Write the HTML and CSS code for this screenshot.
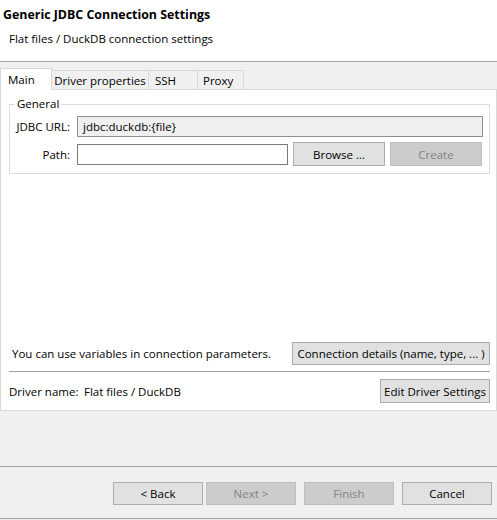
FILE: index.html
```html
<!DOCTYPE html>
<html>
<head>
    <meta charset="utf-8">
    <title>Generic JDBC Connection Settings</title>
    <link rel="stylesheet" href="styles.css">
</head>
<body>
    <div class="header">
        <div class="title">Generic JDBC Connection Settings</div>
        <div class="subtitle">Flat files / DuckDB connection settings</div>
    </div>

    <div class="main">
        <div class="tabs">
            <div class="tab tab-main active">Main</div>
            <div class="tab tab-driver">Driver properties</div>
            <div class="tab tab-ssh">SSH</div>
            <div class="tab tab-proxy">Proxy</div>
        </div>

        <div class="panel">
            <fieldset class="group">
                <legend>General</legend>
                <div class="row row-url">
                    <label class="field-label">JDBC URL:</label>
                    <div class="field readonly url-field">jdbc:duckdb:{file}</div>
                </div>
                <div class="row row-path">
                    <label class="field-label">Path:</label>
                    <div class="field path-field"></div>
                    <button class="btn btn-browse">Browse ...</button>
                    <button class="btn btn-create" disabled>Create</button>
                </div>
            </fieldset>

            <div class="bottom">
                <div class="vars-row">
                    <span>You can use variables in connection parameters.</span>
                    <button class="btn btn-details">Connection details (name, type, ... )</button>
                </div>
                <div class="separator"></div>
                <div class="driver-row">
                    <span class="driver-label">Driver name:</span>
                    <span class="driver-name">Flat files / DuckDB</span>
                    <button class="btn btn-edit">Edit Driver Settings</button>
                </div>
            </div>
        </div>
    </div>

    <div class="footer">
        <button class="btn nav-btn btn-back">&lt; Back</button>
        <button class="btn nav-btn btn-next" disabled>Next &gt;</button>
        <button class="btn nav-btn btn-finish" disabled>Finish</button>
        <button class="btn nav-btn btn-cancel">Cancel</button>
    </div>
</body>
</html>
```

FILE: styles.css
```css
body {
    margin: 0;
    width: 497px;
    height: 520px;
    overflow: hidden;
    font-family: "Open Sans", "Noto Sans", sans-serif;
    font-size: 11.5px;
    color: #000;
    background: #f0f0f0;
}

.header {
    height: 61px;
    background: #fff;
    border-bottom: 1px solid #a0a0a0;
}

.title {
    font-weight: bold;
    font-size: 12.4px;
    padding: 6px 0 0 3px;
    line-height: 18px;
}

.subtitle {
    margin-top: 6px;
    padding-left: 9px;
    line-height: 18px;
}

.main {
    height: 404px;
    padding-top: 6px;
    box-sizing: border-box;
}

/* tabs */
.tabs {
    display: flex;
    align-items: flex-end;
    height: 21px;
    position: relative;
    z-index: 1;
}

.tab {
    box-sizing: border-box;
    height: 19px;
    border: 1px solid #d9d9d9;
    border-bottom: none;
    background: #f0f0f0;
    display: flex;
    align-items: center;
    margin-left: -1px;
}

.tab.active {
    height: 22px;
    margin-bottom: -1px;
    background: #fff;
    margin-left: 0;
}

.tab-main { width: 52px; padding-left: 7px; }
.tab-driver { width: 98px; justify-content: center; }
.tab-ssh { width: 50px; padding-left: 6px; }
.tab-proxy { width: 47px; padding-left: 5px; }

/* panel */
.panel {
    box-sizing: border-box;
    height: 322px;
    background: #fff;
    border: 1px solid #d9d9d9;
    display: flex;
    flex-direction: column;
}

.group {
    box-sizing: border-box;
    width: 481px;
    margin: 7px 0 0 8px;
    padding: 0 0 7px 0;
    border: 1px solid #dcdcdc;
}

.group legend {
    margin-left: 5px;
    padding: 0 2px;
    line-height: 14px;
}

.row {
    display: flex;
    align-items: center;
}

.row-url {
    height: 21px;
    margin-top: 5px;
}

.row-path {
    height: 24px;
    margin-top: 5px;
}

.field-label {
    width: 60px;
    margin-right: 7px;
    text-align: right;
    flex-shrink: 0;
}

.field {
    box-sizing: border-box;
    height: 21px;
    border: 1px solid #7a7a7a;
    background: #fff;
    line-height: 19px;
    padding-left: 5px;
}

.field.readonly {
    background: #f0f0f0;
    border-color: #8f8f8f;
}

.url-field { width: 406px; }
.path-field { width: 211px; }

.btn {
    box-sizing: border-box;
    font-family: inherit;
    font-size: 11.5px;
    color: #000;
    background: #e1e1e1;
    border: 1px solid #adadad;
    padding: 0;
    margin: 0;
    flex-shrink: 0;
}

.btn:disabled {
    background: #cccccc;
    border-color: #bfbfbf;
    color: #838383;
}

.btn-browse {
    width: 92px;
    height: 24px;
    margin-left: 5px;
}

.btn-create {
    width: 92px;
    height: 24px;
    margin-left: 5px;
}

/* bottom part of the panel */
.bottom {
    margin-top: auto;
    padding-bottom: 7px;
}

.vars-row {
    display: flex;
    align-items: center;
    justify-content: space-between;
    padding: 0 6px 0 11px;
}

.btn-details {
    width: 198px;
    height: 23px;
}

.separator {
    height: 1px;
    background: #a0a0a0;
    margin: 6px 6px 7px 8px;
}

.driver-row {
    display: flex;
    align-items: center;
    padding: 0 6px 0 8px;
}

.driver-label {
    width: 75px;
    flex-shrink: 0;
}

.btn-edit {
    width: 110px;
    height: 24px;
    margin-left: auto;
}

/* footer */
.footer {
    box-sizing: border-box;
    height: 53px;
    border-top: 1px solid #a0a0a0;
    border-bottom: 1px solid #a0a0a0;
    display: flex;
    justify-content: flex-end;
    align-items: flex-start;
    padding: 15px 5px 0 0;
}

.nav-btn {
    width: 90px;
    height: 23px;
}

.btn-next { margin-left: 3px; }
.btn-finish { margin-left: 8px; }
.btn-cancel { margin-left: 8px; }
```
